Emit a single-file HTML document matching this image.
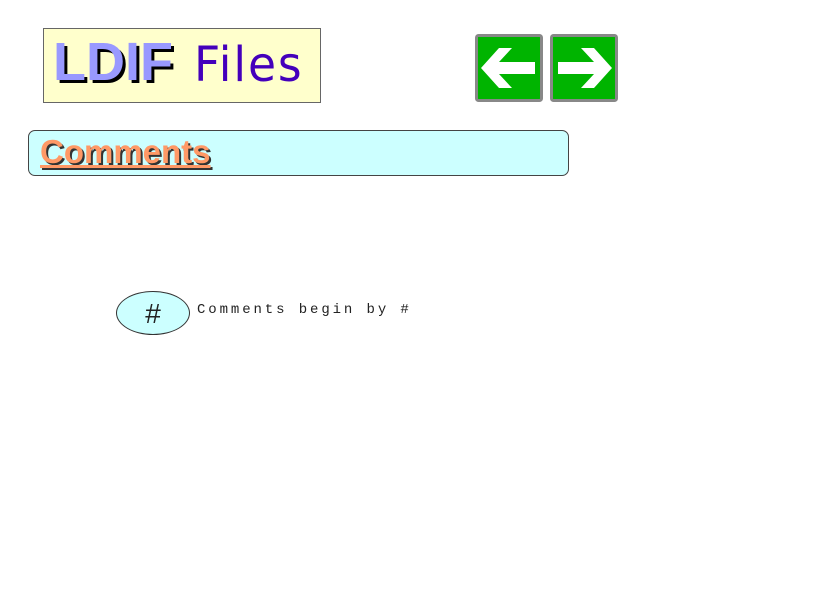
<!DOCTYPE html>
<html><head><meta charset="utf-8"><style>
body{margin:0;width:816px;height:612px;background:#fff;position:relative;overflow:hidden;font-family:"Liberation Sans",sans-serif}
.title{position:absolute;left:43px;top:28px;width:276px;height:73px;background:#ffffcc;border:1px solid #666;}
.ldif{position:absolute;left:9px;top:2px;font-size:54px;font-weight:bold;color:#9999ff;text-shadow:3px 3px 0 #000;letter-spacing:0px}
.files{position:absolute;left:150px;top:8px;font-size:48px;color:#4400bb;font-family:"DejaVu Sans",sans-serif;font-weight:normal;letter-spacing:2px;transform:scaleX(0.95);transform-origin:left}
.bar{position:absolute;left:28px;top:130px;width:539px;height:44px;background:#ccffff;border:1px solid #444;border-radius:7px}
.cm{position:absolute;left:11px;top:2px;font-size:33px;font-weight:bold;color:#ff9966;text-decoration:underline;text-shadow:2px 2px 0 #333;}
.ell{position:absolute;left:116px;top:291px;width:72px;height:42px;border:1px solid #333;border-radius:50%;background:#ccffff;text-align:center;line-height:44px;font-size:28px;color:#222;font-family:"Liberation Sans",sans-serif}
.txt{position:absolute;left:197px;top:302px;font-family:"Liberation Mono",monospace;font-size:14px;letter-spacing:2.9px;color:#222}
</style></head><body>
<div class="title"><span class="ldif">LDIF</span><span class="files">Files</span></div>
<svg style="position:absolute;left:475px;top:34px" width="144" height="68">
<rect x="1.5" y="1.5" width="65" height="65" fill="#00b400" stroke="#888" stroke-width="3" rx="2"/>
<polygon points="6,34 24,14 37,14 24,28 60,28 60,40 24,40 37,54 24,54" fill="#fff"/>
<rect x="76.5" y="1.5" width="65" height="65" fill="#00b400" stroke="#888" stroke-width="3" rx="2"/>
<polygon points="137,34 119,14 106,14 119,28 83,28 83,40 119,40 106,54 119,54" fill="#fff"/>
</svg>
<div class="bar"><span class="cm">Comments</span></div>
<div class="ell">#</div>
<div class="txt">Comments begin by #</div>
</body></html>
